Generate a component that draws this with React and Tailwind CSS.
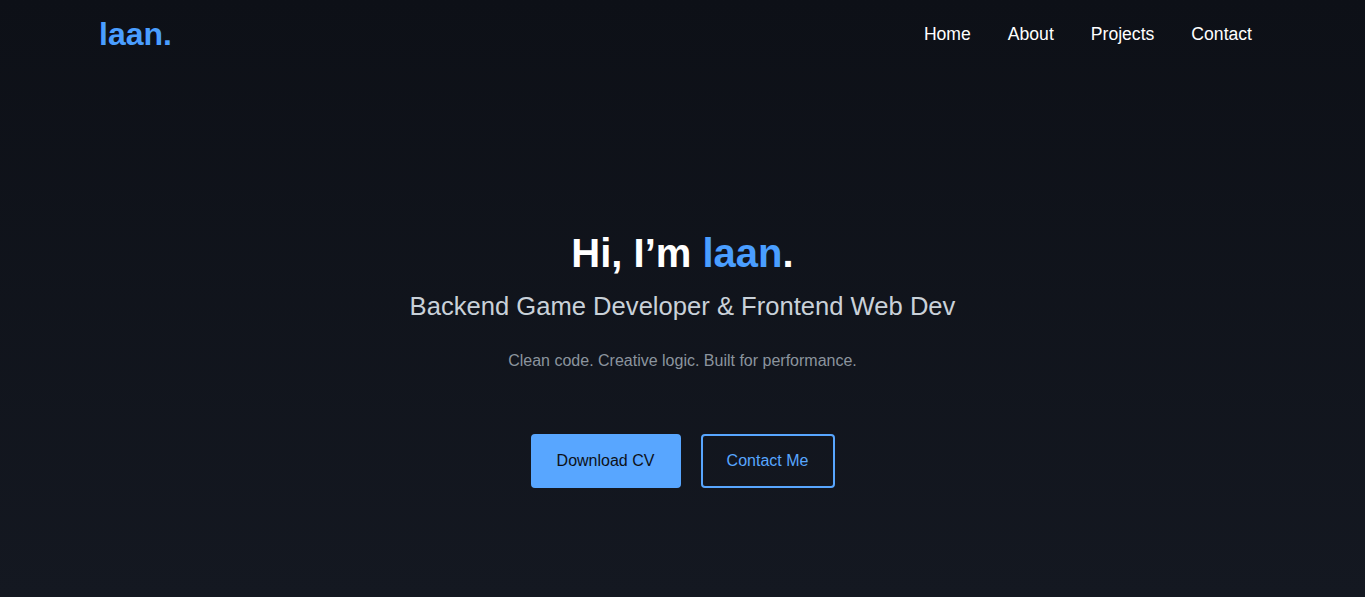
export default function App() {
  const font = { fontFamily: '"Liberation Sans", Arial, sans-serif' };
  return (
    <div
      className="min-h-screen w-full bg-gradient-to-b from-[#0d1017] to-[#141821] text-white"
      style={font}
    >
      <nav className="flex h-[68px] items-center justify-between pl-[99px] pr-[113px]">
        <div className="text-[32px] font-bold leading-none text-[#4a9eff]">laan.</div>
        <ul className="flex items-center gap-[37px] text-[17.6px] text-white">
          <li>Home</li>
          <li>About</li>
          <li>Projects</li>
          <li>Contact</li>
        </ul>
      </nav>
      <section className="flex flex-col items-center pt-[162px] text-center">
        <h1 className="text-[40px] font-bold leading-[46px] text-white">
          Hi, I’m <span className="text-[#4a9eff]">laan</span>.
        </h1>
        <h2 className="mt-[16px] text-[25.6px] leading-[29.4px] text-[#c9d1d9]">
          Backend Game Developer &amp; Frontend Web Dev
        </h2>
        <p className="mt-[31px] text-[16px] leading-[18.4px] text-[#8b949e]">
          Clean code. Creative logic. Built for performance.
        </p>
        <div className="mt-[63px] flex gap-[20px]">
          <button className="flex h-[54px] w-[150px] items-center justify-center rounded-[4px] border-2 border-[#58a6ff] bg-[#58a6ff] text-[16px] text-[#0d1117]">
            Download CV
          </button>
          <button className="flex h-[54px] w-[134px] items-center justify-center rounded-[4px] border-2 border-[#58a6ff] bg-transparent text-[16px] text-[#58a6ff]">
            Contact Me
          </button>
        </div>
      </section>
    </div>
  );
}
